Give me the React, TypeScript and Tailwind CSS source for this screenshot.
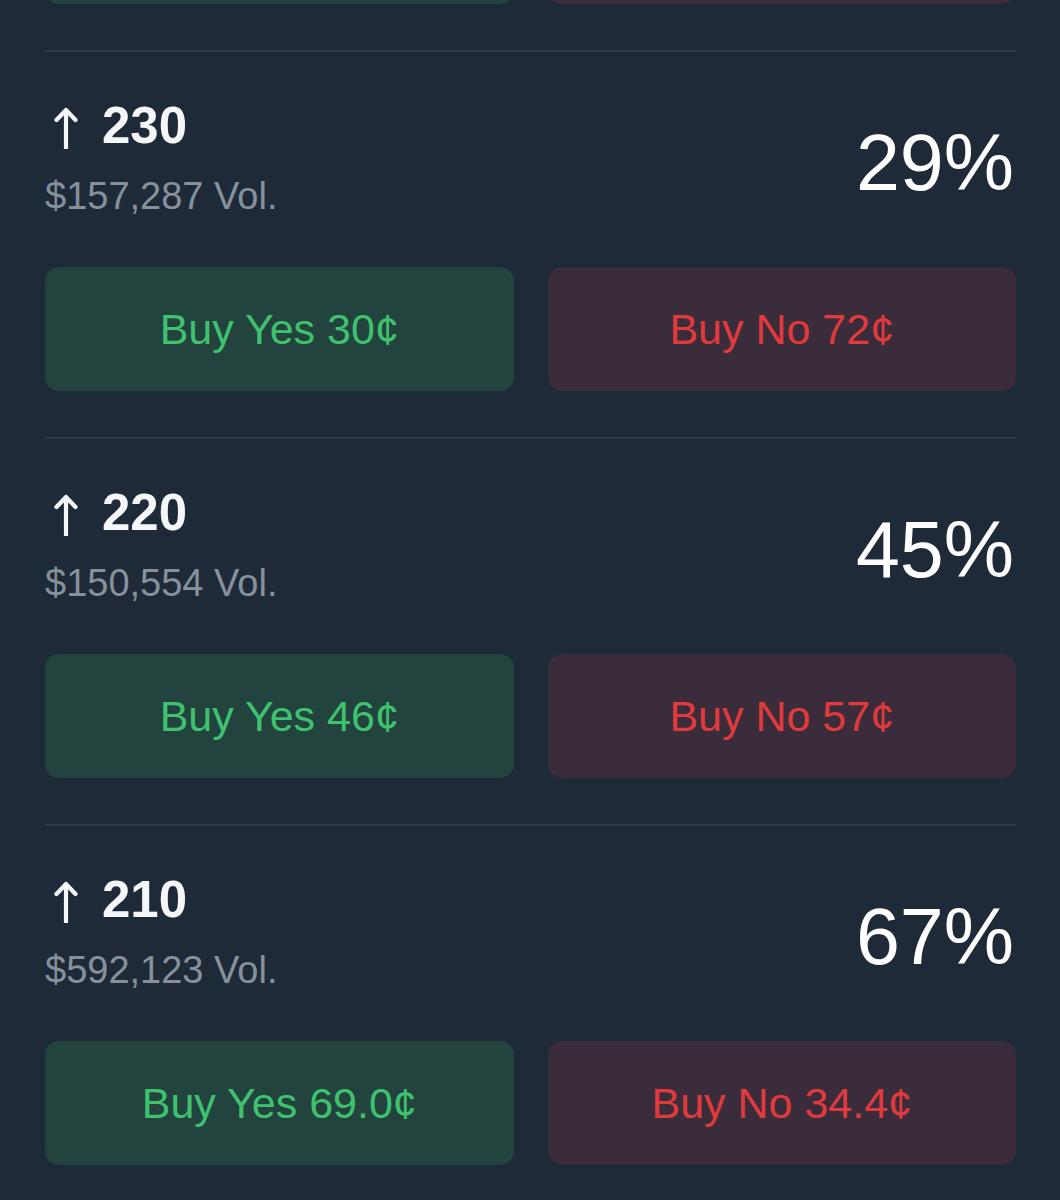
const markets = [
  { strike: "230", vol: "$157,287 Vol.", pct: "29%", yes: "30¢", no: "72¢" },
  { strike: "220", vol: "$150,554 Vol.", pct: "45%", yes: "46¢", no: "57¢" },
  { strike: "210", vol: "$592,123 Vol.", pct: "67%", yes: "69.0¢", no: "34.4¢" },
];

const font = { fontFamily: '"Liberation Sans", Arial, sans-serif' };

function UpArrow() {
  return (
    <svg width="24" height="42" viewBox="0 0 24 42" fill="none" className="shrink-0">
      <path d="M12 3V41M12 3L2.5 13M12 3L21.5 13" stroke="#f4f6f8" strokeWidth="4.2" strokeLinecap="round" strokeLinejoin="round" />
    </svg>
  );
}

function Buttons({ yes, no }: { yes?: string; no?: string }) {
  return (
    <div className="grid grid-cols-2 gap-[34px] h-[124px]">
      <button className="rounded-[14px] bg-[#23433f] text-[#3ec26e] text-[43px] leading-none">
        {yes && `Buy Yes ${yes}`}
      </button>
      <button className="rounded-[14px] bg-[#3a2c3a] text-[#e13a3c] text-[43px] leading-none">
        {no && `Buy No ${no}`}
      </button>
    </div>
  );
}

export default function App() {
  return (
    <div className="min-h-[1200px] bg-[#1e2a38] overflow-hidden" style={font}>
      <div className="mx-[45px] w-[971px]">
        {/* previous market, scrolled mostly out of view */}
        <div className="mt-[-120px] pb-[46px]">
          <Buttons />
        </div>

        {markets.map((m) => (
          <div key={m.strike} className="border-t-2 border-[#2b3b49] pt-[44px] pb-[46px]">
            <div className="flex justify-between items-start">
              <div>
                <div className="flex items-center h-[60px] pl-[9px]">
                  <div className="mt-[4px]">
                    <UpArrow />
                  </div>
                  <span className="ml-[24px] text-[51px] leading-[60px] font-semibold text-[#f4f6f8]">
                    {m.strike}
                  </span>
                </div>
                <div className="mt-[18px] text-[38px] leading-[44px] text-[#87919c]">{m.vol}</div>
              </div>
              <div className="mt-[27px] mr-[2px] text-[79px] leading-[80px] font-medium text-white">{m.pct}</div>
            </div>
            <div className="mt-[49px]">
              <Buttons yes={m.yes} no={m.no} />
            </div>
          </div>
        ))}
      </div>
    </div>
  );
}
